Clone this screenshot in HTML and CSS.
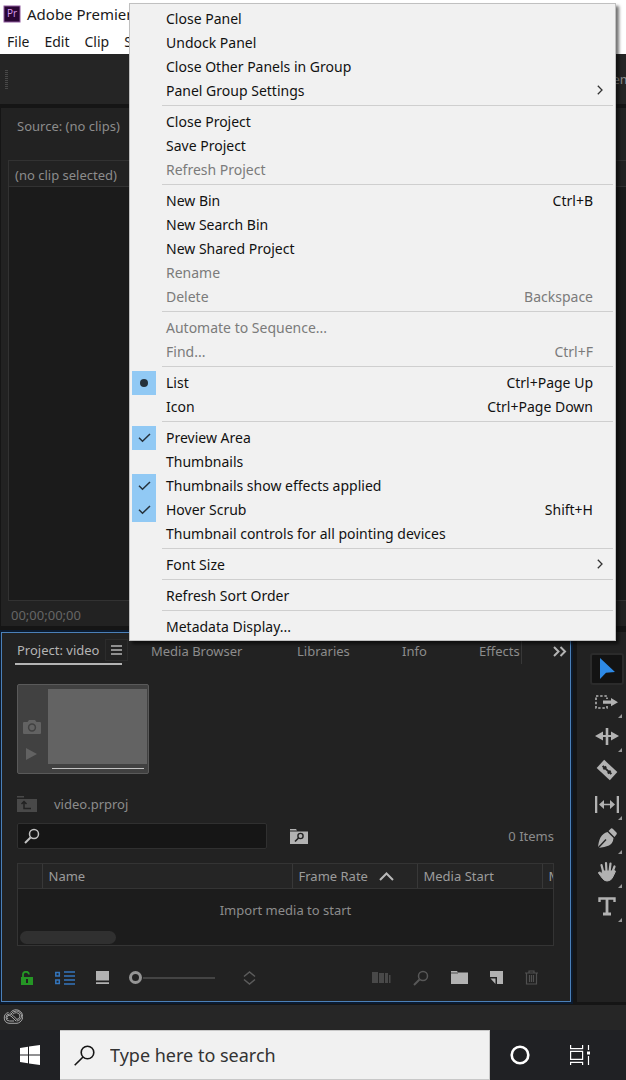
FILE: index.html
```html
<!DOCTYPE html>
<html lang="en">
<head>
<meta charset="utf-8">
<title>Adobe Premiere Pro</title>
<link rel="stylesheet" href="styles.css">
</head>
<body>
<div class="app">
  <header class="titlebar">
    <svg class="pr-logo" width="18" height="18" viewBox="0 0 18 18" aria-hidden="true"><rect x="1" y="1" width="16" height="16" fill="#2a0634" stroke="#8f5a9e" stroke-width="1"/><text x="9" y="12" text-anchor="middle" class="pr-text">Pr</text></svg>
    <span>Adobe Premiere</span>
  </header>
  <nav class="menubar">
    <button>File</button><button>Edit</button><button>Clip</button><button>S</button>
  </nav>
  <div class="workspaces"><span class="grip"></span><span class="workspace-name">em</span></div>

  <section class="source">
    <h2 class="source-title">Source: (no clips)</h2>
    <div class="monitor">
      <div class="monitor-head">(no clip selected)</div>
      <div class="monitor-view"></div>
    </div>
    <div class="timecode">00;00;00;00</div>
  </section>

  <div class="lower">
    <section class="project">
      <div class="tabs">
        <div class="tab-active"><button class="tab on">Project: video</button><button class="burger" aria-label="Panel menu"><svg width="11" height="10" viewBox="0 0 11 10"><path d="M0 1h11M0 5h11M0 9h11" stroke="#b4b4b4" stroke-width="1.3"/></svg></button></div>
        <button class="tab t-media">Media Browser</button>
        <button class="tab t-lib">Libraries</button>
        <button class="tab t-info">Info</button>
        <button class="tab t-effects">Effects</button>
        <button class="more" aria-label="More panels"><svg width="14" height="11" viewBox="0 0 14 11" fill="none" stroke="#b4b4b4" stroke-width="2"><path d="M1 1l4.500 4.500L1 10M7.500 1L12 5.500 7.500 10"/></svg></button>
      </div>

      <div class="preview">
        <div class="preview-side">
          <svg width="18" height="14" viewBox="0 0 18 14"><path d="M0 3q0-1 1-1h3.500L6 0h6l1.500 2H17q1 0 1 1v10q0 1-1 1H1q-1 0-1-1z" fill="#626262"/><circle cx="9" cy="7.500" r="3.400" fill="#626262" stroke="#414141" stroke-width="1.500"/></svg>
          <svg width="18" height="12" viewBox="0 0 18 12"><path d="M3 0l11 6-11 6z" fill="#626262"/></svg>
        </div>
        <div class="preview-main"><div class="poster"></div><div class="scrub"></div></div>
      </div>

      <div class="path">
        <svg width="20" height="16" viewBox="0 0 20 16"><path d="M0 0h7v1.500H0zM0 3h20v13H0z" fill="#494949"/><path d="M14 12.500H7V6M4.500 8L7 5.500 9.500 8" fill="none" stroke="#222" stroke-width="1.500"/></svg>
        <span>video.prproj</span>
      </div>

      <div class="find-row">
        <label class="find"><svg width="16" height="16" viewBox="0 0 16 16" fill="none" stroke="#c2c2c2"><circle cx="10" cy="6" r="4.500" stroke-width="1.500"/><path d="M6.500 9.500L1 15" stroke-width="2"/></svg><input type="text" aria-label="Search project"></label>
        <button class="find-bin" aria-label="New search bin"><svg width="18" height="15" viewBox="0 0 18 15"><path d="M0 0h6l1 1.500H0zM0 2.500h18V15H0z" fill="#b2b2b2"/><circle cx="10.500" cy="7" r="2.600" fill="none" stroke="#222" stroke-width="1.400"/><path d="M8.500 9L5 12.500" stroke="#222" stroke-width="1.600"/></svg></button>
        <span class="count">0 Items</span>
      </div>

      <div class="bin">
        <table class="list">
          <thead><tr><th class="c-label"></th><th class="c-name">Name</th><th class="c-rate">Frame Rate <svg width="15" height="9" viewBox="0 0 15 9"><path d="M1 8l6.500-6.500L14 8" fill="none" stroke="#b8b8b8" stroke-width="2"/></svg></th><th class="c-start">Media Start</th><th class="c-end">M</th></tr></thead>
        </table>
        <div class="empty">Import media to start</div>
        <div class="scrollbar"></div>
      </div>

      <div class="toolbar">
        <button class="b-lock" aria-label="Project writable"><svg width="12" height="14" viewBox="0 0 12 14"><path d="M2 7V4a3 3 0 0 1 6-.5" fill="none" stroke="#259625" stroke-width="1.800"/><path d="M0 6h12v8H0z" fill="#259625"/><path d="M6 8v4" stroke="#222" stroke-width="2"/></svg></button>
        <button class="b-list" aria-label="List view"><svg width="20" height="14" viewBox="0 0 20 14" fill="none" stroke="#3476bd" stroke-width="1.500"><path d="M.8 1.500h3.500V5H.8zM.8 9h3.500v3.500H.8zM9 1h11M9 5h11M9 9h11M9 13h11"/></svg></button>
        <button class="b-icon" aria-label="Icon view"><svg width="13" height="13" viewBox="0 0 13 13" fill="#b2b2b2"><path d="M0 0h13v9.500H0zM0 11.300h13V13H0z"/></svg></button>
        <input class="zoom" type="range" min="0" max="100" value="0" aria-label="Zoom">
        <button class="b-sort" aria-label="Sort icons"><svg width="13" height="14" viewBox="0 0 13 14" fill="none" stroke="#5c5c5c" stroke-width="1.500"><path d="M1 5.500L6.500 1 12 5.500M1 8.500L6.500 13 12 8.500"/></svg></button>
        <span class="right-tools">
          <button aria-label="Automate to sequence"><svg width="19" height="11" viewBox="0 0 19 11" fill="#494949"><path d="M0 0h6v11H0zM7 1h5v10H7zM13 1h3v10h-3zM17 3h1.500v8H17z"/></svg></button>
          <button aria-label="Find"><svg width="16" height="16" viewBox="0 0 16 16" fill="none" stroke="#585858"><circle cx="10" cy="6" r="4.500" stroke-width="1.500"/><path d="M6.500 9.500L1 15" stroke-width="2"/></svg></button>
          <button aria-label="New bin"><svg width="17" height="13" viewBox="0 0 17 13" fill="#b2b2b2"><path d="M0 0h6l1 1.500h10V13H0z"/><path d="M0 2h7" stroke="#222" stroke-width=".7"/></svg></button>
          <button aria-label="New item"><svg width="13" height="13" viewBox="0 0 13 13"><path d="M0 0h13v13H7V6H0z" fill="#b2b2b2"/><path d="M.5 7.500H5.500V13z" fill="#b2b2b2"/></svg></button>
          <button aria-label="Clear"><svg width="13" height="15" viewBox="0 0 13 15" fill="none" stroke="#505050"><path d="M0 3h13M4 3V1h5v2M1.500 3v11h10V3M4.500 5v7M6.500 5v7M8.500 5v7" stroke-width="1.200"/></svg></button>
        </span>
      </div>
    </section>

    <aside class="tools">
      <button class="tool on" aria-label="Selection"><svg width="24" height="24" viewBox="0 0 24 24"><path d="M5 1l15 14-9 .8L5 22z" fill="#2e8ae6"/></svg></button>
      <button class="tool sub" aria-label="Track select"><svg width="24" height="24" viewBox="0 0 24 24"><path d="M1 6h11v12H1z" fill="none" stroke="#b2b2b2" stroke-width="1.600" stroke-dasharray="2.400 1.800"/><path d="M7 9h12v6.500H7z" fill="#222"/><path d="M8 10.500h8V8l7 4.200-7 4.100v-2.500H8z" fill="#b2b2b2"/></svg></button>
      <button class="tool sub" aria-label="Ripple edit"><svg width="24" height="24" viewBox="0 0 24 24" fill="#b2b2b2"><path d="M10.700 4h2.600v17h-2.600zM0 12l8-4.500v3.600h8V7.500l8 4.500-8 4.500v-3.600H8v3.600z"/></svg></button>
      <button class="tool" aria-label="Razor"><svg width="24" height="24" viewBox="0 0 24 24"><g transform="rotate(43 12 12)"><path d="M3 6.500h18v11H3z" fill="#b2b2b2"/><path d="M6 11h2v-1h2v1h4v-1h2v1h2v2h-2v1h-2v-1h-4v1H8v-1H6z" fill="#222"/></g></svg></button>
      <button class="tool sub" aria-label="Slip"><svg width="26" height="24" viewBox="0 0 26 24" fill="#b2b2b2"><path d="M1 4h2.300v17H1zM22.700 4H25v17h-2.300zM5 12.500L10 8v3.700h6V8l5 4.500-5 4.500v-3.700h-6V17z"/></svg></button>
      <button class="tool sub" aria-label="Pen"><svg width="24" height="24" viewBox="0 0 24 24" fill="#b2b2b2"><path d="M13.500 5L16 2.500Q17 2 18 3l3.500 3.500q.800 1 0 2L19.500 11z"/><path d="M12.500 6l6 6q-.5 5.500-4.500 7.500-4 1.500-11 2.500Q3.500 15 5.500 11.500 8 7 12.500 6z"/><path d="M3 22l8-8.500" stroke="#222" stroke-width="1.400"/></svg></button>
      <button class="tool sub" aria-label="Hand"><svg width="24" height="24" viewBox="0 0 24 24" fill="none" stroke="#b2b2b2" stroke-linecap="round"><path d="M8.500 13L6.500 5M11.500 12l-.5-9M14.500 12l1-8.500M17 13l2.500-6.500" stroke-width="2.200"/><path d="M7.500 11h10.500l1.500-.5q1.500 0 .5 2-2 4-3 6-2 2.500-5 2.500-2.500 0-4.500-2.500l-4-5.500q0-1.500 1.800-.8L8 14z" fill="#b2b2b2" stroke-width="1"/></svg></button>
      <button class="tool sub" aria-label="Type"><svg width="24" height="24" viewBox="0 0 24 24" fill="none" stroke="#b2b2b2"><path d="M4.500 8V4.500h15V8" stroke-width="2.400"/><path d="M12 4v15.500M8 20h8" stroke-width="2.800"/></svg></button>
    </aside>
  </div>

  <footer class="status"><svg width="20" height="15" viewBox="0 0 20 15" fill="none" stroke="#a5a5a5" stroke-width="1"><path d="M5.500 3.500A5.500 5.500 0 0 0 6 14.300h8A6.800 6.800 0 1 0 7.500 3.500"/><path d="M11 12H6.500a3.500 3.500 0 0 1 0-7q2 0 3.500 1.500l4 4"/><path d="M13 12l-5-5q-2-1.500-3.500 0T5 10M8 5q2-3 5.500-3a5 5 0 1 1 0 10M10 5q1.500-1.500 3.500-1.300a3.400 3.400 0 1 1 0 6.800"/></svg></footer>

  <footer class="taskbar">
    <button class="start" aria-label="Start"><svg width="20" height="20" viewBox="0 0 20 20" fill="#fff"><path d="M0 3l8-1.200v7.700H0zM9 1.600L20 0v9.500H9zM0 10.500h8v7.700L0 17zM9 10.500h11V20L9 18.400z"/></svg></button>
    <label class="search"><svg width="21" height="21" viewBox="0 0 21 21" fill="none" stroke="#161616" stroke-width="1.600"><circle cx="13.500" cy="7.500" r="6.300"/><path d="M9 12l-8.300 8.300"/></svg><input type="text" placeholder="Type here to search" aria-label="Search Windows"></label>
    <button class="cortana" aria-label="Cortana"><svg width="20" height="20" viewBox="0 0 20 20"><circle cx="10" cy="10" r="8.300" fill="none" stroke="#fff" stroke-width="2.600"/></svg></button>
    <button class="taskview" aria-label="Task view"><svg width="20" height="20" viewBox="0 0 20 20" fill="none" stroke="#fff" stroke-width="1.200"><path d="M.6 0v3.600h12V0M.6 6.400h12v8H.6zM.6 20v-2.600h12V20M18.500 0v5M18.500 11v9"/><path d="M17 6.500h3v3h-3z" fill="#fff" stroke="none"/></svg></button>
  </footer>

  <div class="menu" role="menu">
    <button role="menuitem">Close Panel</button>
    <button role="menuitem">Undock Panel</button>
    <button role="menuitem">Close Other Panels in Group</button>
    <button role="menuitem" class="has-sub">Panel Group Settings<svg class="arrow" width="6" height="10" viewBox="0 0 6 10"><path d="M.8.8L5 5 .8 9.200"/></svg></button>
    <hr>
    <button role="menuitem">Close Project</button>
    <button role="menuitem">Save Project</button>
    <button role="menuitem" disabled>Refresh Project</button>
    <hr>
    <button role="menuitem">New Bin<kbd>Ctrl+B</kbd></button>
    <button role="menuitem">New Search Bin</button>
    <button role="menuitem">New Shared Project</button>
    <button role="menuitem" disabled>Rename</button>
    <button role="menuitem" disabled>Delete<kbd>Backspace</kbd></button>
    <hr>
    <button role="menuitem" disabled>Automate to Sequence...</button>
    <button role="menuitem" disabled>Find...<kbd>Ctrl+F</kbd></button>
    <hr>
    <button role="menuitemradio" aria-checked="true"><span class="mark"><svg width="8" height="8" viewBox="0 0 8 8"><circle cx="4" cy="4" r="4" fill="#25313b"/></svg></span>List<kbd>Ctrl+Page Up</kbd></button>
    <button role="menuitemradio" aria-checked="false">Icon<kbd>Ctrl+Page Down</kbd></button>
    <hr>
    <button role="menuitemcheckbox" aria-checked="true"><span class="mark"><svg width="13" height="10" viewBox="0 0 13 10"><path d="M1 4.800l3.500 3.500L12 1"/></svg></span>Preview Area</button>
    <button role="menuitemcheckbox" aria-checked="false">Thumbnails</button>
    <button role="menuitemcheckbox" aria-checked="true"><span class="mark"><svg width="13" height="10" viewBox="0 0 13 10"><path d="M1 4.800l3.500 3.500L12 1"/></svg></span>Thumbnails show effects applied</button>
    <button role="menuitemcheckbox" aria-checked="true"><span class="mark"><svg width="13" height="10" viewBox="0 0 13 10"><path d="M1 4.800l3.500 3.500L12 1"/></svg></span>Hover Scrub<kbd>Shift+H</kbd></button>
    <button role="menuitemcheckbox" aria-checked="false">Thumbnail controls for all pointing devices</button>
    <hr>
    <button role="menuitem" class="has-sub">Font Size<svg class="arrow" width="6" height="10" viewBox="0 0 6 10"><path d="M.8.8L5 5 .8 9.200"/></svg></button>
    <hr>
    <button role="menuitem">Refresh Sort Order</button>
    <hr>
    <button role="menuitem">Metadata Display...</button>
  </div>
</div>
</body>
</html>
```
FILE: styles.css
```css
* { box-sizing: border-box; }
body { margin: 0; background: #151515; font-family: "Noto Sans", "Open Sans", sans-serif; font-size: 13px; color: #8c8c8c; }
button { appearance: none; border: 0; margin: 0; padding: 0; background: none; font: inherit; color: inherit; display: flex; align-items: center; white-space: nowrap; }
button, label, svg { flex-shrink: 0; }
input { font: inherit; border: 0; outline: 0; background: none; padding: 0; margin: 0; min-width: 0; }
svg { display: block; }

.app { position: relative; display: flex; flex-direction: column; min-height: 100vh; overflow: hidden; }
.titlebar { display: flex; align-items: center; gap: 6px; height: 30px; padding: 0 0 2px 3px; background: #fff; color: #1a1a1a; font-size: 15px; }
.pr-text { font-family: "Open Sans", sans-serif; font-size: 10px; fill: #d99af0; }
.menubar { display: flex; gap: 15px; height: 24px; padding: 0 7px 2px; background: #fff; color: #1a1a1a; font-size: 14px; }
.workspaces { display: flex; align-items: center; justify-content: space-between; height: 50px; padding-left: 5px; background: #252525; }
.workspace-name { margin-right: -6px; }
.grip { width: 3px; height: 19px; background: repeating-linear-gradient(#484848 0 1px, #252525 1px 2px); }

.source { flex: 1; display: flex; flex-direction: column; margin: 4px 0 6px 1px; padding-left: 7px; background: #222; }
.source-title { margin: 0; padding: 0 9px; font-weight: 400; font-size: 13px; line-height: 36px; height: 52px; }
.monitor { flex: 1; display: flex; flex-direction: column; border: 1px solid #323232; border-right: 0; }
.monitor-head { height: 26px; padding-left: 6px; line-height: 28px; border-bottom: 1px solid #323232; }
.monitor-view { flex: 1; background: #1b1b1b; }
.timecode { height: 25px; padding-left: 3px; line-height: 28px; color: #666; }

.lower { display: flex; gap: 6px; }
.project { flex: 1; min-width: 0; margin-left: 1px; padding: 4px 16px 0 15px; border: 1px solid #4b80b8; background: #222; box-shadow: 0 0 0 2px #0b1b30; }
.tabs { display: flex; align-items: center; height: 28px; margin-right: -13px; }
.tab-active { display: flex; align-items: center; width: 107px; height: 28px; margin-left: -2px; padding-left: 2px; border-bottom: 2px solid #b4b4b4; }
.tab { height: 26px; }
.tab.on { width: 88px; color: #b4b4b4; }
.burger { justify-content: center; width: 23px; height: 22px; border: 1px solid #2c2c2c; }
.t-media { width: 146px; margin-left: 29px; }
.t-lib { width: 105px; }
.t-info { width: 77px; }
.t-effects { width: 43px; border-right: 1px solid #383838; }
.more { margin-left: auto; }

.preview { display: flex; width: 132px; height: 90px; margin-top: 19px; border: 1px solid #5a5a5a; border-radius: 2px; background: #414141; }
.preview-side { display: flex; flex-direction: column; gap: 14px; width: 30px; padding: 35px 0 0 5px; }
.preview-main { flex: 1; padding: 4px 1px 0 0; }
.poster { height: 75px; background: #636363; }
.scrub { margin: 4px 3px 0 4px; height: 1px; background: #c2c2c2; }

.path { display: flex; align-items: center; gap: 17px; height: 20px; margin-top: 20px; }
.find-row { display: flex; align-items: center; margin-top: 9px; }
.find { display: flex; align-items: center; gap: 6px; width: 250px; height: 26px; padding: 0 6px; border: 1px solid #303030; border-radius: 2px; background: #161616; }
.find input { flex: 1; color: #b4b4b4; }
.find-bin { margin-left: 23px; }
.count { margin-left: auto; }

.bin { display: flex; flex-direction: column; margin-top: 14px; height: 83px; border: 1px solid #343434; background: #1c1c1c; overflow: hidden; }
.list { width: 100%; table-layout: fixed; border-collapse: collapse; background: #252525; color: #9c9c9c; }
.list th { height: 24px; padding: 2px 0 0 6px; font-weight: 400; line-height: 21px; text-align: left; white-space: nowrap; overflow: hidden; border-bottom: 1px solid #343434; border-right: 1px solid #383838; }
.list .c-end { border-right: 0; }
.list svg { display: inline-block; margin-left: 8px; }
.c-label { width: 24px; }
.c-rate, .c-start { width: 125px; }
.c-end { width: 11px; }
.empty { flex: 1; line-height: 42px; text-align: center; }
.scrollbar { width: 96px; height: 13px; margin: 0 0 1px 2px; border-radius: 7px; background: #303030; }

.toolbar { display: flex; align-items: center; height: 49px; margin-top: 6px; padding: 2px 16px 0 4px; }
.b-list { margin-left: 22px; }
.b-icon { margin-left: 21px; }
.zoom { appearance: none; width: 86px; height: 14px; margin-left: 20px; background: linear-gradient(#444, #444) right center / 72px 2px no-repeat; }
.zoom::-webkit-slider-thumb { appearance: none; width: 13px; height: 13px; border: 3px solid #959595; border-radius: 50%; background: #222; }
.b-sort { margin-left: 28px; }
.right-tools { display: flex; align-items: center; gap: 22px; margin-left: auto; }

.tools { display: flex; flex-direction: column; align-items: center; width: 49px; padding: 21px 0 0 10px; background: #222; }
.tool { position: relative; justify-content: center; width: 34px; height: 34px; }
.tool.on { height: 32px; border: 2px solid #2b2b2b; border-radius: 3px; background: #131313; }
.tool.sub::after { content: ""; position: absolute; right: 2px; bottom: 1px; border-left: 4px solid transparent; border-bottom: 4px solid #969696; }

.status { height: 25px; margin-top: 3px; padding: 4px 3px; background: #262626; }
.taskbar { display: flex; align-items: center; height: 50px; background: #202124; }
.start { justify-content: center; width: 60px; height: 50px; }
.search { flex: 1; display: flex; align-items: center; gap: 15px; height: 50px; padding-left: 14px; border: 1px solid #c8c8c8; border-left: 0; background: #f1f1f1; }
.search input { flex: 1; color: #333; font-size: 18px; }
.search input::placeholder { color: #333; opacity: 1; }
.cortana { justify-content: center; width: 60px; }
.taskview { justify-content: center; width: 60px; margin-right: 16px; }

.menu { position: absolute; top: 3px; left: 129px; right: 10px; padding: 3px 2px 1px; border: 1px solid #c0c0c0; background: #f1f1f1; color: #111; font-size: 14px; box-shadow: 3px 3px 3px rgba(0, 0, 0, .55); }
.menu button { position: relative; width: 100%; height: 24px; padding: 0 20px 2px 34px; }
.menu button:disabled { color: #7b7b7b; }
.menu hr { height: 1px; margin: 2px 0 4px 30px; border: 0; background: #cfcfcf; }
.menu kbd { margin-left: auto; font: inherit; }
.menu .has-sub { padding-right: 10px; }
.arrow { margin-left: auto; fill: none; stroke: #333; stroke-width: 1.300; }
.mark { position: absolute; left: 0; top: 0; display: flex; align-items: center; justify-content: center; width: 24px; height: 24px; background: #91c9f4; }
.mark path { fill: none; stroke: #25313b; stroke-width: 1.500; }
```
